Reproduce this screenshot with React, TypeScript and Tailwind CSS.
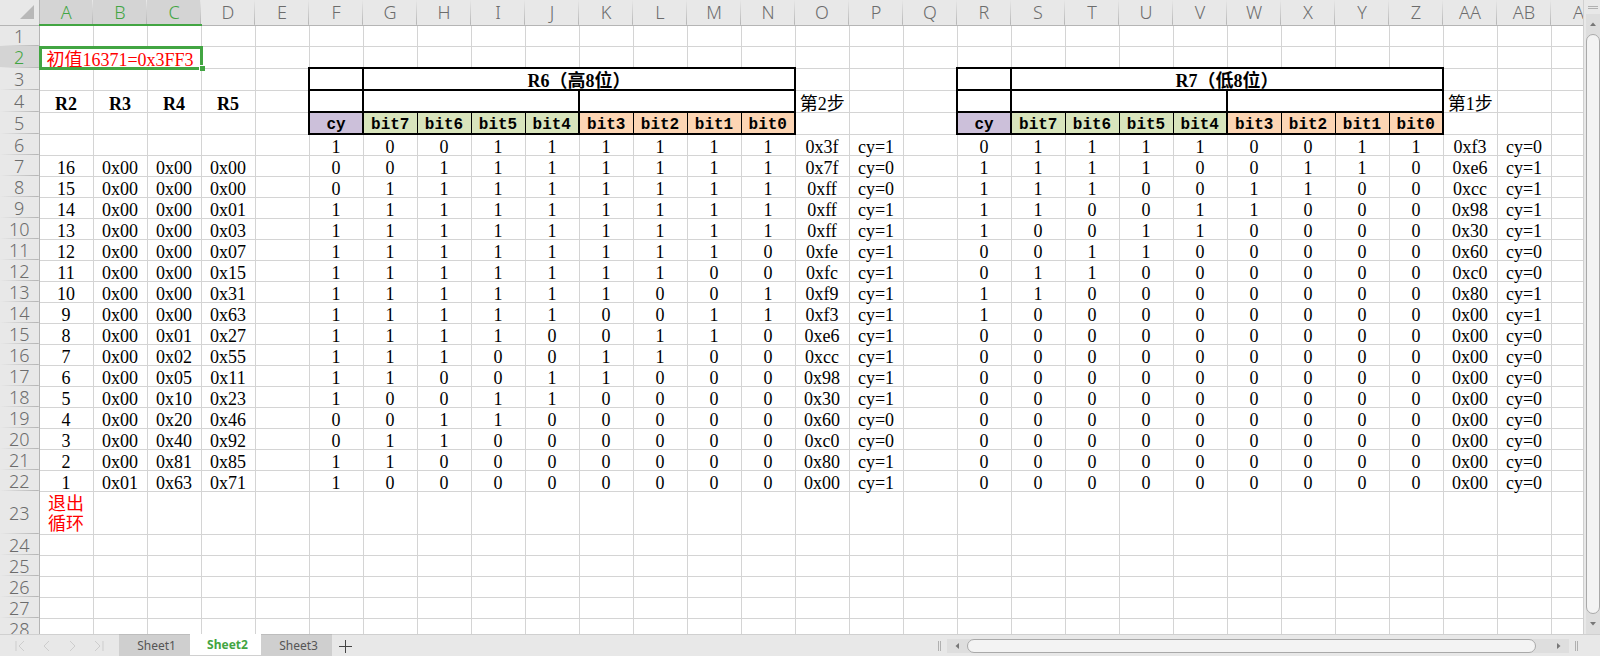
import { useState } from "react";
import clsx from "clsx";

type Reg = { hex: string; cy: number };
type Step = { count: string; bcd: string[]; high: Reg; low: Reg };

const COLUMNS = [
  "A", "B", "C", "D", "E", "F", "G", "H", "I", "J", "K", "L", "M", "N", "O",
  "P", "Q", "R", "S", "T", "U", "V", "W", "X", "Y", "Z", "AA", "AB", "AC",
];

// count | R3 R4 R5 | R6 cy | R7 cy
const RAW = [
  "||3f 1|f3 0",
  "16|00 00 00|7f 0|e6 1",
  "15|00 00 00|ff 0|cc 1",
  "14|00 00 01|ff 1|98 1",
  "13|00 00 03|ff 1|30 1",
  "12|00 00 07|fe 1|60 0",
  "11|00 00 15|fc 1|c0 0",
  "10|00 00 31|f9 1|80 1",
  "9|00 00 63|f3 1|00 1",
  "8|00 01 27|e6 1|00 0",
  "7|00 02 55|cc 1|00 0",
  "6|00 05 11|98 1|00 0",
  "5|00 10 23|30 1|00 0",
  "4|00 20 46|60 0|00 0",
  "3|00 40 92|c0 0|00 0",
  "2|00 81 85|80 1|00 0",
  "1|01 63 71|00 1|00 0",
];

const parseReg = (text: string): Reg => {
  const [hex, cy] = text.split(" ");
  return { hex, cy: Number(cy) };
};

const STEPS: Step[] = RAW.map((line) => {
  const parts = line.split("|");
  return {
    count: parts[0],
    bcd: parts[1] ? parts[1].split(" ").map((v) => `0x${v}`) : ["", "", ""],
    high: parseReg(parts[2]),
    low: parseReg(parts[3]),
  };
});

const BITS = ["bit7", "bit6", "bit5", "bit4", "bit3", "bit2", "bit1", "bit0"];

const toBits = (hex: string) => parseInt(hex, 16).toString(2).padStart(8, "0").split("");

const CELL = "border border-[#d4d4d4] p-0 text-center align-bottom whitespace-nowrap";
const BOX = "border-2 border-black p-0 text-center align-bottom whitespace-nowrap";

const Blank = ({ n }: { n: number }) => (
  <>
    {Array.from({ length: n }, (_, i) => (
      <td key={i} className={CELL}></td>
    ))}
  </>
);

const RowHead = ({ n, active }: { n: number; active?: boolean }) => (
  <th
    scope="row"
    className={clsx(
      "border-r border-[#b5b5b5] p-0 text-center font-['Noto_Sans'] text-lg leading-5 font-light",
      "bg-[linear-gradient(to_right,#e8e8e8,#b5b5b5)] bg-[length:100%_1px] bg-bottom bg-no-repeat",
      active ? "bg-[#d4d4d4] text-[#42a542]" : "bg-[#e8e8e8] text-[#6c6c6c]"
    )}
  >
    {n}
  </th>
);

const RegBits = ({ reg }: { reg: Reg }) => (
  <>
    <td className={CELL}>{reg.cy}</td>
    {toBits(reg.hex).map((bit, i) => (
      <td key={i} className={CELL}>{bit}</td>
    ))}
    <td className={CELL}>0x{reg.hex}</td>
    <td className={CELL}>cy={reg.cy}</td>
  </>
);

const BitLabels = () => (
  <>
    <td className={clsx(BOX, "bg-[#ccc0da] font-['Liberation_Mono'] text-base leading-4 font-bold")}>cy</td>
    {BITS.map((bit, i) => (
      <td
        key={bit}
        className={clsx(
          "border-y-2 border-black p-0 text-center align-bottom font-['Liberation_Mono'] text-base leading-4 font-bold",
          i === 0 || i === 4 ? "border-l-2" : "border-l",
          i === 3 || i === 7 ? "border-r-2" : "border-r",
          i < 4 ? "bg-[#d8e4bc]" : "bg-[#fcd5b4]"
        )}
      >
        {bit}
      </td>
    ))}
  </>
);

const Sheet = () => (
  <table className="w-max table-fixed border-collapse bg-white font-['Liberation_Serif','Noto_Sans_CJK_SC',serif] text-lg leading-4 text-black">
    <colgroup>
      <col className="w-[39px]" />
      {COLUMNS.map((c) => (
        <col key={c} className={c === "AC" ? "w-[66px]" : "w-[54px]"} />
      ))}
    </colgroup>
    <thead>
      <tr className="h-[25px]">
        <th className="border-r border-b border-[#b5b5b5] bg-[#e8e8e8] p-0">
          <svg className="ml-5 block" width="14" height="14" viewBox="0 0 14 14">
            <path d="M14 0V14H0Z" fill="#b8b8b8" />
          </svg>
        </th>
        {COLUMNS.map((c, i) => (
          <th
            key={c}
            scope="col"
            className={clsx(
              "p-0 text-center font-['Noto_Sans'] text-lg leading-5 font-light",
              "bg-[linear-gradient(to_bottom,#e8e8e8,#b5b5b5)] bg-[length:1px_100%] bg-right bg-no-repeat",
              i < 3
                ? "border-b-2 border-[#42a542] bg-[#d4d4d4] text-[#42a542]"
                : "border-b border-[#b5b5b5] bg-[#e8e8e8] text-[#6c6c6c]"
            )}
          >
            {c}
          </th>
        ))}
      </tr>
    </thead>
    <tbody>
      <tr className="h-[21px]">
        <RowHead n={1} />
        <Blank n={29} />
      </tr>
      <tr className="h-[22px]">
        <RowHead n={2} active />
        <td colSpan={3} className={clsx(CELL, "relative text-[#ff0000]")}>
          初值16371=0x3FF3
          {/* selection frame and fill handle */}
          <div className="absolute -top-px -right-[2px] -bottom-[2px] -left-px border-3 border-[#42a542]"></div>
          <div className="absolute -right-[4px] -bottom-[3px] size-[6px] border-t border-l border-white bg-[#42a542]"></div>
        </td>
        <Blank n={26} />
      </tr>
      <tr className="h-[22px]">
        <RowHead n={3} />
        <Blank n={5} />
        <td className={BOX}></td>
        <td colSpan={8} className={clsx(BOX, "font-bold")}>R6（高8位）</td>
        <Blank n={3} />
        <td className={BOX}></td>
        <td colSpan={8} className={clsx(BOX, "font-bold")}>R7（低8位）</td>
        <Blank n={3} />
      </tr>
      <tr className="h-[22px]">
        <RowHead n={4} />
        {["R2", "R3", "R4", "R5"].map((r) => (
          <td key={r} className={clsx(CELL, "font-bold")}>{r}</td>
        ))}
        <Blank n={1} />
        <td className={BOX}></td>
        <td colSpan={4} className={BOX}></td>
        <td colSpan={4} className={BOX}></td>
        <td className={CELL}>第2步</td>
        <Blank n={2} />
        <td className={BOX}></td>
        <td colSpan={4} className={BOX}></td>
        <td colSpan={4} className={BOX}></td>
        <td className={CELL}>第1步</td>
        <Blank n={2} />
      </tr>
      <tr className="h-[22px]">
        <RowHead n={5} />
        <Blank n={5} />
        <BitLabels />
        <Blank n={3} />
        <BitLabels />
        <Blank n={3} />
      </tr>
      {STEPS.map((step, i) => (
        <tr key={i} className="h-[21px]">
          <RowHead n={i + 6} />
          <td className={CELL}>{step.count}</td>
          {step.bcd.map((v, j) => (
            <td key={j} className={CELL}>{v}</td>
          ))}
          <Blank n={1} />
          <RegBits reg={step.high} />
          <Blank n={1} />
          <RegBits reg={step.low} />
          <Blank n={1} />
        </tr>
      ))}
      <tr className="h-[43px]">
        <RowHead n={23} />
        <td className={clsx(CELL, "pt-[2px] leading-5 text-[#ff0000]")}>
          退出
          <br />
          循环
        </td>
        <Blank n={28} />
      </tr>
      {[24, 25, 26, 27, 28].map((n) => (
        <tr key={n} className="h-[21px]">
          <RowHead n={n} />
          <Blank n={29} />
        </tr>
      ))}
    </tbody>
  </table>
);

const Arrow = ({ d, label }: { d: string; label: string }) => (
  <button aria-label={label} className="flex size-5 shrink-0 items-center justify-center">
    <svg width="8" height="8" viewBox="0 0 8 8">
      <path d={d} fill="#777" />
    </svg>
  </button>
);

const NAV = [
  { label: "First sheet", d: "M1 1V11M9 1L4 6L9 11" },
  { label: "Previous sheet", d: "M8 1L3 6L8 11" },
  { label: "Next sheet", d: "M3 1L8 6L3 11" },
  { label: "Last sheet", d: "M2 1L7 6L2 11M10 1V11" },
];

const App = () => {
  const [active, setActive] = useState("Sheet2");

  return (
    <div className="flex h-screen flex-col overflow-hidden bg-[#e8e8e8]">
      <div className="flex min-h-0 flex-1">
        <div className="min-w-0 flex-1 overflow-hidden">
          <Sheet />
        </div>
        {/* vertical scrollbar */}
        <div className="flex w-[17px] shrink-0 flex-col border-l border-[#d0d0d0] pl-[2px]">
          <div className="flex h-[14px] shrink-0 flex-col justify-center px-[2px]">
            <div className="h-[3px] border-y border-[#b0b0b0]"></div>
          </div>
          <div className="flex min-h-0 flex-1 flex-col items-center bg-[#dedede]">
            <Arrow label="Scroll up" d="M1 6L4 2.5L7 6Z" />
            <div className="w-full flex-1 rounded-full border border-[#a9a9a9] bg-[#f3f3f3]"></div>
            <Arrow label="Scroll down" d="M1 2L4 5.5L7 2Z" />
          </div>
        </div>
      </div>

      <div className="flex h-[22px] shrink-0 items-stretch font-['Noto_Sans',sans-serif] text-xs">
        <div className="flex w-[119px] items-center gap-[14px] border-t border-[#d0d0d0] pl-[15px]">
          {NAV.map((n) => (
            <button key={n.label} aria-label={n.label}>
              <svg width="12" height="12" viewBox="0 0 12 12" fill="none" stroke="#cdcdcd">
                <path d={n.d} />
              </svg>
            </button>
          ))}
        </div>
        {["Sheet1", "Sheet2", "Sheet3"].map((name) => (
          <button
            key={name}
            onClick={() => setActive(name)}
            className={clsx(
              "w-[71px] pl-1",
              active === name
                ? "border-b border-[#d0d0d0] bg-white font-bold text-[#42a542]"
                : "border-t border-[#bdbdbd] bg-[#cfcfcf] text-[#555]"
            )}
          >
            {name}
          </button>
        ))}
        <div className="flex flex-1 items-center border-t border-[#d0d0d0] pl-[6px]">
          <button aria-label="Add sheet">
            <svg width="14" height="14" viewBox="0 0 14 14" stroke="#444">
              <path d="M7.5 1V14M1 7.5H14" />
            </svg>
          </button>
        </div>
        {/* horizontal scrollbar */}
        <div className="flex w-[662px] items-center gap-[6px] border-t border-[#d0d0d0]">
          <div className="h-[10px] w-[3px] border-x border-[#b0b0b0]"></div>
          <div className="flex h-[14px] w-[622px] items-center bg-[#dedede]">
            <Arrow label="Scroll left" d="M6 1L2.5 4L6 7Z" />
            <div className="h-full flex-1 rounded-full border border-[#a9a9a9] bg-[#f3f3f3]"></div>
            <div className="w-[13px]"></div>
            <Arrow label="Scroll right" d="M2 1L5.5 4L2 7Z" />
          </div>
          <div className="h-[10px] w-[3px] border-x border-[#b0b0b0]"></div>
        </div>
      </div>
    </div>
  );
};

export default App;
